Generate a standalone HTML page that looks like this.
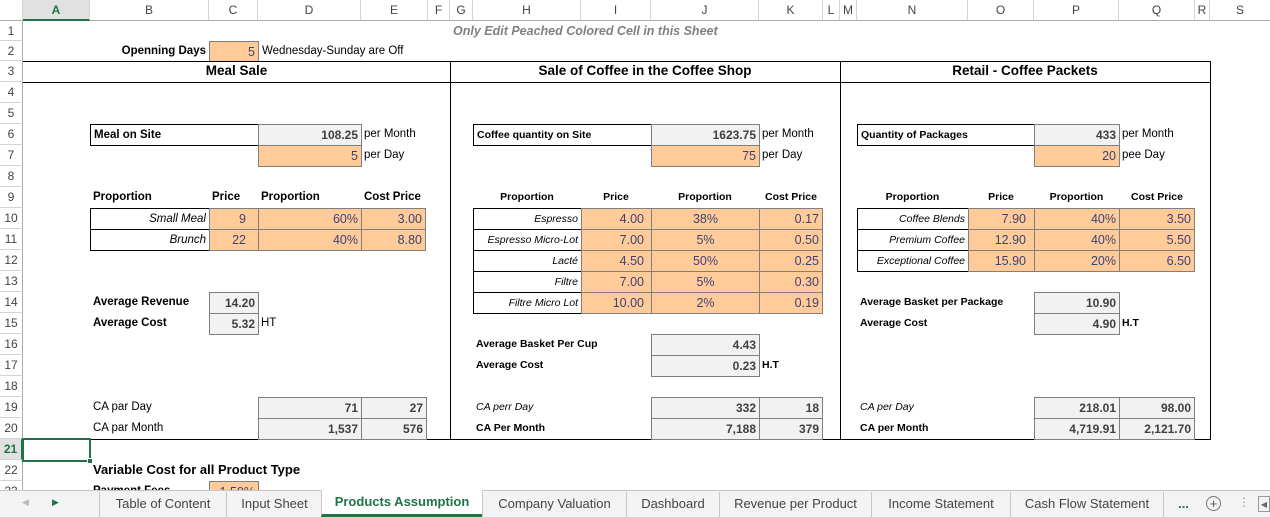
<!DOCTYPE html>
<html><head><meta charset="utf-8"><style>
body{margin:0;width:1270px;height:517px;overflow:hidden;background:#fff;font-family:"Liberation Sans",sans-serif;position:relative}
div{position:absolute;box-sizing:border-box;white-space:nowrap}
.c{height:21px;line-height:20px;font-size:11.5px;padding:0 3px;color:#000}
.s{font-size:10.5px}
.r{text-align:right}.m{text-align:center}.b{font-weight:bold}.i{font-style:italic}
.p{background:#FFCC99;border:1px solid #7F7F7F;color:#3F3F76;font-size:12.5px}
.g{background:#F2F2F2;border:1px solid #7F7F7F;color:#3F3F3F;font-weight:bold;font-size:12px}
.k{border:1px solid #000}
.hd{top:0;height:21px;line-height:21px;font-size:12px;color:#444;text-align:center;border-right:1px solid #d4d4d4;border-bottom:1px solid #ababab;background:#fff}
.rh{left:0;width:23px;font-size:12px;color:#444;text-align:center;border-right:1px solid #ababab;border-bottom:1px solid #d4d4d4;background:#fff;height:21px;line-height:21px}
.ln{background:#000}
.tab{top:492px;height:25px;line-height:24px;font-size:13px;color:#444;text-align:center;border-left:1px solid #c6c6c6}
</style></head><body>
<!-- column headers -->
<div class="hd" style="left:0;width:23px;background:#fff"></div>
<div class="hd" style="left:23px;width:67px;background:#e1e1e1;color:#217346;font-weight:bold;border-bottom:2px solid #217346">A</div>
<div class="hd" style="left:90px;width:119px">B</div>
<div class="hd" style="left:209px;width:49px">C</div>
<div class="hd" style="left:258px;width:103px">D</div>
<div class="hd" style="left:361px;width:67px">E</div>
<div class="hd" style="left:428px;width:22px">F</div>
<div class="hd" style="left:450px;width:23px">G</div>
<div class="hd" style="left:473px;width:108px">H</div>
<div class="hd" style="left:581px;width:70px">I</div>
<div class="hd" style="left:651px;width:108px">J</div>
<div class="hd" style="left:759px;width:64px">K</div>
<div class="hd" style="left:823px;width:17px">L</div>
<div class="hd" style="left:840px;width:17px">M</div>
<div class="hd" style="left:857px;width:111px">N</div>
<div class="hd" style="left:968px;width:66px">O</div>
<div class="hd" style="left:1034px;width:85px">P</div>
<div class="hd" style="left:1119px;width:76px">Q</div>
<div class="hd" style="left:1195px;width:15px">R</div>
<div class="hd" style="left:1210px;width:60px;border-right:none">S</div>
<!-- row headers -->
<div class="rh" style="top:21px;height:20px;line-height:20px">1</div>
<div class="rh" style="top:41px;height:20px;line-height:20px">2</div>
<div class="rh" style="top:61px">3</div><div class="rh" style="top:82px">4</div><div class="rh" style="top:103px">5</div>
<div class="rh" style="top:124px">6</div><div class="rh" style="top:145px">7</div><div class="rh" style="top:166px">8</div>
<div class="rh" style="top:187px">9</div><div class="rh" style="top:208px">10</div><div class="rh" style="top:229px">11</div>
<div class="rh" style="top:250px">12</div><div class="rh" style="top:271px">13</div><div class="rh" style="top:292px">14</div>
<div class="rh" style="top:313px">15</div><div class="rh" style="top:334px">16</div><div class="rh" style="top:355px">17</div>
<div class="rh" style="top:376px">18</div><div class="rh" style="top:397px">19</div><div class="rh" style="top:418px">20</div>
<div class="rh" style="top:439px;background:#e1e1e1;color:#217346;font-weight:bold;border-right:2px solid #217346">21</div>
<div class="rh" style="top:460px">22</div><div class="rh" style="top:481px">23</div>

<!-- row 1,2 -->
<div class="c i b m" style="left:450px;width:270px;top:21px;color:#808080;font-size:12.5px">Only Edit Peached Colored Cell in this Sheet</div>
<div class="c b r" style="left:90px;width:119px;top:41px;height:20px">Openning Days</div>
<div class="c p r" style="left:209px;width:50px;top:41px;height:21px">5</div>
<div class="c" style="left:259px;width:200px;top:41px;height:20px">Wednesday-Sunday are Off</div>

<!-- section frames -->
<div class="ln" style="left:23px;width:1188px;top:61px;height:1px"></div>
<div class="ln" style="left:23px;width:1188px;top:82px;height:1px"></div>
<div class="ln" style="left:23px;width:1188px;top:439px;height:1px"></div>
<div class="ln" style="left:450px;width:1px;top:61px;height:379px"></div>
<div class="ln" style="left:840px;width:1px;top:61px;height:379px"></div>
<div class="ln" style="left:1210px;width:1px;top:61px;height:379px"></div>
<div class="c b m" style="left:23px;width:427px;top:61px;font-size:13.5px">Meal Sale</div>
<div class="c b m" style="left:450px;width:390px;top:61px;font-size:13.5px">Sale of Coffee in the Coffee Shop</div>
<div class="c b m" style="left:840px;width:370px;top:61px;font-size:13.5px">Retail - Coffee Packets</div>

<!-- Meal section -->
<div class="c k b" style="left:90px;width:169px;top:124px;height:22px">Meal on Site</div>
<div class="c g r" style="left:258px;width:104px;top:124px;height:22px">108.25</div>
<div class="c" style="left:361px;top:124px">per Month</div>
<div class="c p r" style="left:258px;width:104px;top:145px;height:22px">5</div>
<div class="c" style="left:361px;top:145px">per Day</div>

<div class="c b" style="left:90px;top:187px">Proportion</div>
<div class="c b" style="left:209px;top:187px">Price</div>
<div class="c b" style="left:258px;top:187px">Proportion</div>
<div class="c b" style="left:361px;top:187px">Cost Price</div>
<div class="c k i r" style="left:90px;width:120px;top:208px;height:22px">Small Meal</div>
<div class="c k i r" style="left:90px;width:120px;top:229px;height:22px">Brunch</div>
<div class="c p r" style="left:209px;width:50px;top:208px;height:22px;padding-right:12px">9</div>
<div class="c p r" style="left:209px;width:50px;top:229px;height:22px;padding-right:12px">22</div>
<div class="c p r" style="left:258px;width:104px;top:208px;height:22px">60%</div>
<div class="c p r" style="left:258px;width:104px;top:229px;height:22px">40%</div>
<div class="c p r" style="left:361px;width:65px;top:208px;height:22px">3.00</div>
<div class="c p r" style="left:361px;width:65px;top:229px;height:22px">8.80</div>

<div class="c b" style="left:90px;top:292px">Average Revenue</div>
<div class="c g r" style="left:209px;width:50px;top:292px;height:22px">14.20</div>
<div class="c b" style="left:90px;top:313px">Average Cost</div>
<div class="c g r" style="left:209px;width:50px;top:313px;height:22px">5.32</div>
<div class="c" style="left:258px;top:313px">HT</div>

<div class="c" style="left:90px;top:397px">CA par Day</div>
<div class="c" style="left:90px;top:418px">CA par Month</div>
<div class="c g r" style="left:258px;width:104px;top:397px;height:22px">71</div>
<div class="c g r" style="left:361px;width:66px;top:397px;height:22px">27</div>
<div class="c g r" style="left:258px;width:104px;top:418px;height:22px">1,537</div>
<div class="c g r" style="left:361px;width:66px;top:418px;height:22px">576</div>

<!-- Coffee shop section -->
<div class="c k b s" style="left:473px;width:179px;top:124px;height:22px">Coffee quantity on Site</div>
<div class="c g r" style="left:651px;width:109px;top:124px;height:22px">1623.75</div>
<div class="c" style="left:759px;top:124px">per Month</div>
<div class="c p r" style="left:651px;width:109px;top:145px;height:22px">75</div>
<div class="c" style="left:759px;top:145px">per Day</div>

<div class="c b s m" style="left:473px;width:108px;top:187px">Proportion</div>
<div class="c b s m" style="left:581px;width:70px;top:187px">Price</div>
<div class="c b s m" style="left:651px;width:108px;top:187px">Proportion</div>
<div class="c b s m" style="left:759px;width:64px;top:187px">Cost Price</div>
<div class="c k i r s" style="left:473px;width:109px;top:208px;height:22px">Espresso</div>
<div class="c k i r s" style="left:473px;width:109px;top:229px;height:22px">Espresso Micro-Lot</div>
<div class="c k i r s" style="left:473px;width:109px;top:250px;height:22px">Lacté</div>
<div class="c k i r s" style="left:473px;width:109px;top:271px;height:22px">Filtre</div>
<div class="c k i r s" style="left:473px;width:109px;top:292px;height:22px">Filtre Micro Lot</div>
<div class="c p r" style="left:581px;width:71px;top:208px;height:22px;padding-right:7px">4.00</div>
<div class="c p r" style="left:581px;width:71px;top:229px;height:22px;padding-right:7px">7.00</div>
<div class="c p r" style="left:581px;width:71px;top:250px;height:22px;padding-right:7px">4.50</div>
<div class="c p r" style="left:581px;width:71px;top:271px;height:22px;padding-right:7px">7.00</div>
<div class="c p r" style="left:581px;width:71px;top:292px;height:22px;padding-right:7px">10.00</div>
<div class="c p m" style="left:651px;width:109px;top:208px;height:22px">38%</div>
<div class="c p m" style="left:651px;width:109px;top:229px;height:22px">5%</div>
<div class="c p m" style="left:651px;width:109px;top:250px;height:22px">50%</div>
<div class="c p m" style="left:651px;width:109px;top:271px;height:22px">5%</div>
<div class="c p m" style="left:651px;width:109px;top:292px;height:22px">2%</div>
<div class="c p r" style="left:759px;width:64px;top:208px;height:22px">0.17</div>
<div class="c p r" style="left:759px;width:64px;top:229px;height:22px">0.50</div>
<div class="c p r" style="left:759px;width:64px;top:250px;height:22px">0.25</div>
<div class="c p r" style="left:759px;width:64px;top:271px;height:22px">0.30</div>
<div class="c p r" style="left:759px;width:64px;top:292px;height:22px">0.19</div>

<div class="c b s" style="left:473px;top:334px">Average Basket Per Cup</div>
<div class="c b s" style="left:473px;top:355px">Average Cost</div>
<div class="c g r" style="left:651px;width:109px;top:334px;height:22px">4.43</div>
<div class="c g r" style="left:651px;width:109px;top:355px;height:22px">0.23</div>
<div class="c b s" style="left:759px;top:355px">H.T</div>

<div class="c i s" style="left:473px;top:397px">CA perr Day</div>
<div class="c b s" style="left:473px;top:418px">CA Per Month</div>
<div class="c g r" style="left:651px;width:109px;top:397px;height:22px">332</div>
<div class="c g r" style="left:759px;width:64px;top:397px;height:22px">18</div>
<div class="c g r" style="left:651px;width:109px;top:418px;height:22px">7,188</div>
<div class="c g r" style="left:759px;width:64px;top:418px;height:22px">379</div>

<!-- Retail section -->
<div class="c k b s" style="left:857px;width:178px;top:124px;height:22px">Quantity of Packages</div>
<div class="c g r" style="left:1034px;width:86px;top:124px;height:22px">433</div>
<div class="c" style="left:1119px;top:124px">per Month</div>
<div class="c p r" style="left:1034px;width:86px;top:145px;height:22px">20</div>
<div class="c" style="left:1119px;top:145px">pee Day</div>

<div class="c b s m" style="left:857px;width:111px;top:187px">Proportion</div>
<div class="c b s m" style="left:968px;width:66px;top:187px">Price</div>
<div class="c b s m" style="left:1034px;width:85px;top:187px">Proportion</div>
<div class="c b s m" style="left:1119px;width:76px;top:187px">Cost Price</div>
<div class="c k i r s" style="left:857px;width:112px;top:208px;height:22px">Coffee Blends</div>
<div class="c k i r s" style="left:857px;width:112px;top:229px;height:22px">Premium Coffee</div>
<div class="c k i r s" style="left:857px;width:112px;top:250px;height:22px">Exceptional Coffee</div>
<div class="c p r" style="left:968px;width:67px;top:208px;height:22px;padding-right:8px">7.90</div>
<div class="c p r" style="left:968px;width:67px;top:229px;height:22px;padding-right:8px">12.90</div>
<div class="c p r" style="left:968px;width:67px;top:250px;height:22px;padding-right:8px">15.90</div>
<div class="c p r" style="left:1034px;width:86px;top:208px;height:22px">40%</div>
<div class="c p r" style="left:1034px;width:86px;top:229px;height:22px">40%</div>
<div class="c p r" style="left:1034px;width:86px;top:250px;height:22px">20%</div>
<div class="c p r" style="left:1119px;width:76px;top:208px;height:22px">3.50</div>
<div class="c p r" style="left:1119px;width:76px;top:229px;height:22px">5.50</div>
<div class="c p r" style="left:1119px;width:76px;top:250px;height:22px">6.50</div>

<div class="c b s" style="left:857px;top:292px">Average Basket per Package</div>
<div class="c b s" style="left:857px;top:313px">Average Cost</div>
<div class="c g r" style="left:1034px;width:86px;top:292px;height:22px">10.90</div>
<div class="c g r" style="left:1034px;width:86px;top:313px;height:22px">4.90</div>
<div class="c b s" style="left:1119px;top:313px">H.T</div>

<div class="c i s" style="left:857px;top:397px">CA per Day</div>
<div class="c b s" style="left:857px;top:418px">CA per Month</div>
<div class="c g r" style="left:1034px;width:86px;top:397px;height:22px">218.01</div>
<div class="c g r" style="left:1119px;width:76px;top:397px;height:22px">98.00</div>
<div class="c g r" style="left:1034px;width:86px;top:418px;height:22px">4,719.91</div>
<div class="c g r" style="left:1119px;width:76px;top:418px;height:22px">2,121.70</div>

<!-- rows 21-23 -->
<div style="left:22px;top:438px;width:69px;height:24px;border:2px solid #217346"></div>
<div style="left:87px;top:458px;width:6px;height:6px;background:#217346;border:1px solid #fff"></div>
<div class="c b" style="left:90px;top:460px;font-size:13px">Variable Cost for all Product Type</div>
<div class="c b" style="left:90px;top:481px">Payment Fees</div>
<div class="c p r" style="left:209px;width:50px;top:481px;height:22px">1.50%</div>

<!-- tab bar -->
<div style="left:0;top:490px;width:1270px;height:27px;background:#f3f3f3;border-top:1px solid #c6c6c6"></div>
<div style="left:22px;top:497px;font-size:9px;color:#bbb">◀</div>
<div style="left:52px;top:497px;font-size:9px;color:#217346">▶</div>
<div class="tab" style="left:99px;width:127px">Table of Content</div>
<div class="tab" style="left:226px;width:96px">Input Sheet</div>
<div class="tab" style="left:321px;width:161px;background:#fff;color:#217346;font-weight:bold;border-bottom:3px solid #217346;top:490px;height:27px">Products Assumption</div>
<div class="tab" style="left:482px;width:144px">Company Valuation</div>
<div class="tab" style="left:626px;width:93px">Dashboard</div>
<div class="tab" style="left:719px;width:152px">Revenue per Product</div>
<div class="tab" style="left:871px;width:139px">Income Statement</div>
<div class="tab" style="left:1010px;width:153px">Cash Flow Statement</div>
<div class="tab" style="left:1163px;width:40px;color:#217346;font-weight:bold">...</div>
<div style="left:1206px;top:496px;width:15px;height:15px;border:1px solid #777;border-radius:50%;font-size:13px;line-height:13px;text-align:center;color:#555">+</div>
<div style="left:1238px;top:495px;font-size:12px;color:#999">⋮</div>
<div style="left:1258px;top:496px;width:12px;height:16px;border:1px solid #999;font-size:8px;line-height:16px;color:#666;text-align:center">◀</div>
</body></html>
